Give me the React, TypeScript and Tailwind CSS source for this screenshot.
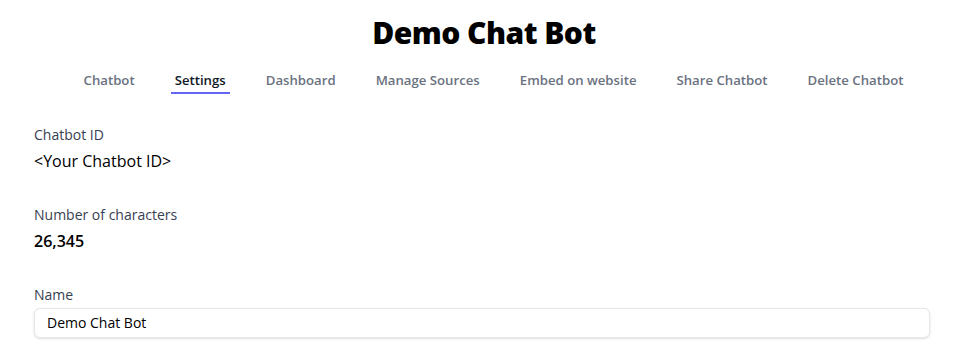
import React from "react";

const tabs = ["Chatbot", "Settings", "Dashboard", "Manage Sources", "Embed on website", "Share Chatbot", "Delete Chatbot"];

export default function App() {
  return (
    <div className="min-h-screen bg-white" style={{ fontFamily: '"Open Sans", "Noto Sans", sans-serif' }}>
      <h1 className="pt-[14px] text-center text-[30px] leading-[38px] font-extrabold tracking-[-0.55px] text-black">Demo Chat Bot</h1>
      <nav className="mt-[19px] flex justify-center gap-[32px] pl-[19px]">
        {tabs.map((t) => (
          <div
            key={t}
            className={
              t === "Settings"
                ? "border-b-2 border-[#6366f1] px-1 pb-[1px] text-[13.2px] font-semibold text-[#111827]"
                : "border-b-2 border-transparent px-1 pb-[1px] text-[13.2px] font-semibold text-[#6b7280]"
            }
          >
            {t}
          </div>
        ))}
      </nav>
      <div className="ml-[34px] mt-[31px] w-[896px]">
        <div className="text-sm font-medium text-[#374151]">Chatbot ID</div>
        <div className="mt-[4px] text-base font-medium text-black">&lt;Your Chatbot ID&gt;</div>
        <div className="mt-[32px] text-sm font-medium text-[#374151]">Number of characters</div>
        <div className="mt-[4px] text-base font-semibold text-black">26,345</div>
        <div className="mt-[32px] text-sm font-medium text-[#374151]">Name</div>
        <div className="mt-[3px] flex h-[30px] items-center rounded-md border border-[#e5e7eb] bg-white px-[12px] text-sm text-black shadow-sm">
          Demo Chat Bot
        </div>
      </div>
    </div>
  );
}
